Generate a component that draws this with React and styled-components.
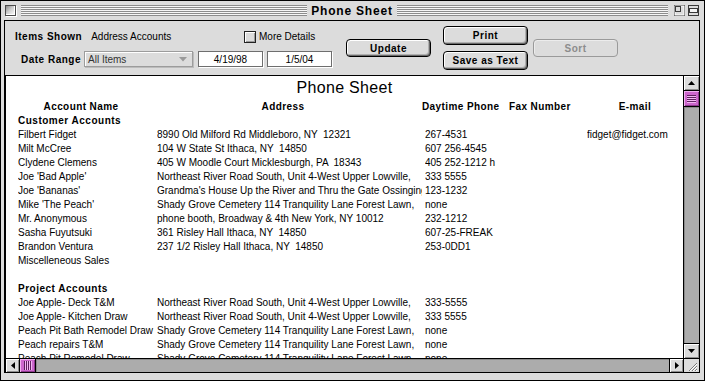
import React from "react";
import styled, { createGlobalStyle } from "styled-components";

const GlobalStyle = createGlobalStyle`
  html, body { margin: 0; padding: 0; background: #fff; }
  body { font-family: "Liberation Sans", Arial, sans-serif; }
`;

const Window = styled.div`
  box-sizing: border-box;
  width: 705px;
  height: 381px;
  border: 1px solid #000;
  background: #dcdcdc;
  padding: 0 4px 7px 3px;
  display: flex;
  flex-direction: column;
  overflow: hidden;
`;

const TitleBar = styled.div`
  height: 19px;
  display: grid;
  grid-template-columns: 1fr auto 1fr;
  align-items: center;
`;

const TitleSide = styled.div`
  display: flex;
  align-items: center;
  gap: ${p => p.$gap || 0}px;
  padding: ${p => p.$pad};
`;

const Stripes = styled.div`
  flex: 1;
  height: 11px;
  background: repeating-linear-gradient(to bottom, #8c8c8c 0 1px, #f6f6f6 1px 2px);
`;

const TitleText = styled.div`
  padding: 0 4px;
  font: bold 12px "Liberation Sans", Arial, sans-serif;
  letter-spacing: 0.8px;
  color: #000;
`;

const CloseBox = styled.div`
  box-sizing: border-box;
  width: 11px;
  height: 11px;
  border: 1px solid #4a4a4a;
  background: linear-gradient(135deg, #8a8a8a 0%, #cfcfcf 45%, #ffffff 100%);
  box-shadow: inset -1px -1px 0 #fff, 1px 1px 0 #fff;
  margin-right: 5px;
`;

const BoxIcon = styled.svg`
  display: block;
  width: 11px;
  height: 11px;
`;

const Panel = styled.div`
  flex: 1;
  min-height: 0;
  border: 1px solid #000;
  display: flex;
  flex-direction: column;
`;

const Toolbar = styled.div`
  height: 54px;
  flex: none;
  display: flex;
  align-items: center;
  padding-left: 10px;
  background: #dcdcdc;
  font-size: 10px;
`;

const Fields = styled.div`
  display: flex;
  flex-direction: column;
  gap: 7px;
`;

const FieldRow = styled.div`
  display: flex;
  align-items: center;
  height: ${p => p.$h}px;
`;

const ShownGroup = styled.div`
  width: 229px;
  display: flex;
  align-items: center;
  gap: 9px;
`;

const Label = styled.span`
  font-weight: bold;
  letter-spacing: 0.5px;
  width: ${p => (p.$w ? `${p.$w}px` : "auto")};
  text-align: ${p => p.$align || "left"};
  color: #000;
`;

const Value = styled.span`
  color: #000;
`;

const Check = styled.span`
  box-sizing: border-box;
  width: 12px;
  height: 12px;
  border: 1px solid #222;
  background: #dcdcdc;
  box-shadow: inset 1px 1px 0 #fff, inset -1px -1px 0 #9a9a9a;
  margin-right: 3px;
`;

const Popup = styled.div`
  box-sizing: border-box;
  width: 109px;
  height: 16px;
  margin-left: 3px;
  border: 1px solid #9c9c9c;
  background: #dcdcdc;
  box-shadow: inset 1px 1px 0 #fff, 1px 1px 0 #bcbcbc;
  display: flex;
  align-items: center;
  justify-content: space-between;
  padding: 0 5px 0 3px;
  color: #333;
`;

const DateField = styled.div`
  box-sizing: border-box;
  width: 65px;
  height: 16px;
  margin-left: ${p => p.$ml}px;
  border: 1px solid #6e6e6e;
  background: #fff;
  box-shadow: 1px 1px 0 #fff;
  display: flex;
  align-items: center;
  justify-content: center;
  color: #000;
`;

const Button = styled.button`
  box-sizing: border-box;
  width: 85px;
  height: ${p => p.$h}px;
  margin: 0 0 0 ${p => p.$ml || 0}px;
  padding: 0;
  border: 1px solid ${p => (p.disabled ? "#9a9a9a" : "#000")};
  border-radius: 4px;
  background: #dcdcdc;
  box-shadow: ${p =>
    p.disabled
      ? "inset 1px 1px 0 #ececec"
      : "inset 1px 1px 0 #fff, inset -1px -1px 0 #6a6a6a, inset -2px -2px 0 #b0b0b0"};
  font: bold 10px "Liberation Sans", Arial, sans-serif;
  letter-spacing: 0.5px;
  color: ${p => (p.disabled ? "#8c8c8c" : "#000")};
`;

const ButtonStack = styled.div`
  display: flex;
  flex-direction: column;
  gap: 6px;
  margin-left: 12px;
`;

const Body = styled.div`
  flex: 1;
  min-height: 0;
  border-top: 1px solid #000;
  display: grid;
  grid-template-columns: 1fr 16px;
  grid-template-rows: 1fr 14px;
`;

const Sheet = styled.div`
  background: #fff;
  border-left: 1px solid #000;
  overflow: hidden;
  padding-top: 2px;
  font-size: 10px;
  color: #000;
`;

const SheetTitle = styled.div`
  text-align: center;
  font-size: 16px;
  line-height: 20px;
  margin-bottom: 2px;
  letter-spacing: 0.3px;
`;

const HeaderRow = styled.div`
  display: grid;
  grid-template-columns: 126px 278px 87px 78px 1fr;
  padding-left: 12px;
  line-height: 14px;
`;

const Header = styled.div`
  font-weight: bold;
  letter-spacing: 0.4px;
  text-align: ${p => p.$align};
  white-space: nowrap;
`;

const Row = styled.div`
  display: grid;
  grid-template-columns: 139px 268px 84px 78px 1fr;
  padding-left: 12px;
  line-height: 14px;
  height: 14px;
`;

const Cell = styled.div`
  white-space: pre;
  overflow: hidden;
  margin-right: 3px;
`;

const Section = styled.div`
  font-weight: bold;
  letter-spacing: 0.5px;
  padding-left: 12px;
  line-height: 14px;
  height: 14px;
`;

const VScroll = styled.div`
  border-left: 1px solid #000;
  display: flex;
  flex-direction: column;
  min-height: 0;
`;

const HScroll = styled.div`
  border-top: 1px solid #000;
  border-left: 1px solid #000;
  display: flex;
`;

const ArrowBox = styled.div`
  flex: none;
  box-sizing: border-box;
  width: ${p => (p.$v ? "auto" : "14px")};
  height: ${p => (p.$v ? "15px" : "auto")};
  background: #dcdcdc;
  box-shadow: inset 1px 1px 0 #fff, inset -1px -1px 0 #8e8e8e;
  border-${p => p.$edge}: 1px solid #000;
  display: flex;
  align-items: center;
  justify-content: center;
`;

const Track = styled.div`
  flex: 1;
  background: #acacac;
  box-shadow: inset 1px 1px 0 #8a8a8a;
`;

const Thumb = styled.div`
  flex: none;
  box-sizing: border-box;
  width: ${p => (p.$v ? "auto" : "16px")};
  height: ${p => (p.$v ? "16px" : "auto")};
  background: #cc66cc;
  border-${p => (p.$v ? "bottom" : "right")}: 1px solid #000;
  box-shadow: inset 1px 1px 0 #f0b0f0, inset -1px -1px 0 #8e3a8e;
  display: flex;
  align-items: center;
  justify-content: center;
`;

const Corner = styled.div`
  border-top: 1px solid #000;
  border-left: 1px solid #000;
  background: #dcdcdc;
  display: flex;
  align-items: center;
  justify-content: center;
`;

const Tri = ({ dir }) => {
  const pts = {
    up: "0,4 7,4 3.5,0",
    down: "0,0 7,0 3.5,4",
    left: "4,0 4,7 0,3.5",
    right: "0,0 0,7 4,3.5"
  }[dir];
  const vert = dir === "up" || dir === "down";
  return (
    <svg width={vert ? 7 : 4} height={vert ? 4 : 7} viewBox={vert ? "0 0 7 4" : "0 0 4 7"}>
      <polygon points={pts} fill="#000" />
    </svg>
  );
};

const Grip = ({ v }) => (
  <svg width={v ? 9 : 8} height={v ? 8 : 9} viewBox={v ? "0 0 9 8" : "0 0 8 9"}>
    {[0, 2, 4, 6].map(i =>
      v ? (
        <g key={i}>
          <rect x="0" y={i} width="9" height="1" fill="#5e1f5e" />
          <rect x="0" y={i + 1} width="9" height="1" fill="#f2b6f2" />
        </g>
      ) : (
        <g key={i}>
          <rect x={i} y="0" width="1" height="9" fill="#5e1f5e" />
          <rect x={i + 1} y="0" width="1" height="9" fill="#f2b6f2" />
        </g>
      )
    )}
  </svg>
);

const customers = [
  ["Filbert Fidget", "8990 Old Milford Rd Middleboro, NY  12321", "267-4531", "", "fidget@fidget.com"],
  ["Milt McCree", "104 W State St Ithaca, NY  14850", "607 256-4545"],
  ["Clydene Clemens", "405 W Moodle Court Micklesburgh, PA  18343", "405 252-1212 h"],
  ["Joe 'Bad Apple'", "Northeast River Road South, Unit 4-West Upper Lowville,", "333 5555"],
  ["Joe 'Bananas'", "Grandma's House Up the River and Thru the Gate Ossinging,", "123-1232"],
  ["Mike 'The Peach'", "Shady Grove Cemetery 114 Tranquility Lane Forest Lawn,", "none"],
  ["Mr. Anonymous", "phone booth, Broadway & 4th New York, NY 10012", "232-1212"],
  ["Sasha Fuyutsuki", "361 Risley Hall Ithaca, NY  14850", "607-25-FREAK"],
  ["Brandon Ventura", "237 1/2 Risley Hall Ithaca, NY  14850", "253-0DD1"],
  ["Miscelleneous Sales", "", ""],
  ["", "", ""]
];

const projects = [
  ["Joe Apple- Deck T&M", "Northeast River Road South, Unit 4-West Upper Lowville,", "333-5555"],
  ["Joe Apple- Kitchen Draw", "Northeast River Road South, Unit 4-West Upper Lowville,", "333 5555"],
  ["Peach Pit Bath Remodel Draw", "Shady Grove Cemetery 114 Tranquility Lane Forest Lawn,", "none"],
  ["Peach repairs T&M", "Shady Grove Cemetery 114 Tranquility Lane Forest Lawn,", "none"],
  ["Peach Pit Remodel Draw", "Shady Grove Cemetery 114 Tranquility Lane Forest Lawn,", "none"]
];

const DataRow = ({ item }) => (
  <Row>
    {[0, 1, 2, 3, 4].map(i => (
      <Cell key={i}>{item[i] || ""}</Cell>
    ))}
  </Row>
);

export default function App() {
  return (
    <>
      <GlobalStyle />
      <Window>
        <TitleBar>
          <TitleSide $pad="0 0 0 1px">
            <CloseBox />
            <Stripes />
          </TitleSide>
          <TitleText>Phone Sheet</TitleText>
          <TitleSide $pad="0 1px 0 0" $gap={3}>
            <Stripes style={{ marginRight: 3 }} />
            <BoxIcon viewBox="0 0 11 11">
              <rect x="0.5" y="0.5" width="10" height="10" fill="#dcdcdc" stroke="#3a3a3a" />
              <rect x="1" y="1" width="9" height="9" fill="none" stroke="#fff" strokeWidth="1" />
              <rect x="1.5" y="1.5" width="5" height="5" fill="#dcdcdc" stroke="#3a3a3a" />
            </BoxIcon>
            <BoxIcon viewBox="0 0 11 11">
              <rect x="0.5" y="0.5" width="10" height="10" fill="#dcdcdc" stroke="#3a3a3a" />
              <rect x="1.5" y="3.5" width="8" height="4" fill="#f4f4f4" stroke="#3a3a3a" />
            </BoxIcon>
          </TitleSide>
        </TitleBar>
        <Panel>
          <Toolbar>
            <Fields>
              <FieldRow $h={15}>
                <ShownGroup>
                  <Label>Items Shown</Label>
                  <Value>Address Accounts</Value>
                </ShownGroup>
                <Check />
                <Value>More Details</Value>
              </FieldRow>
              <FieldRow $h={16}>
                <Label $w={66} $align="right">Date Range</Label>
                <Popup>
                  <span>All Items</span>
                  <svg width="8" height="5" viewBox="0 0 8 5">
                    <polygon points="0,0 8,0 4,4.5" fill="#9a9a9a" />
                  </svg>
                </Popup>
                <DateField $ml={5}>4/19/98</DateField>
                <DateField $ml={4}>1/5/04</DateField>
              </FieldRow>
            </Fields>
            <Button $h={18} $ml={14}>Update</Button>
            <ButtonStack>
              <Button $h={19}>Print</Button>
              <Button $h={19}>Save as Text</Button>
            </ButtonStack>
            <Button $h={18} $ml={5} disabled>Sort</Button>
          </Toolbar>
          <Body>
            <Sheet>
              <SheetTitle>Phone Sheet</SheetTitle>
              <HeaderRow>
                <Header $align="center">Account Name</Header>
                <Header $align="center">Address</Header>
                <Header $align="left">Daytime Phone</Header>
                <Header $align="left">Fax Number</Header>
                <Header $align="center">E-mail</Header>
              </HeaderRow>
              <Section>Customer Accounts</Section>
              {customers.map((c, i) => (
                <DataRow key={i} item={c} />
              ))}
              <Section>Project Accounts</Section>
              {projects.map((c, i) => (
                <DataRow key={i} item={c} />
              ))}
            </Sheet>
            <VScroll>
              <ArrowBox $v $edge="bottom"><Tri dir="up" /></ArrowBox>
              <Thumb $v><Grip v /></Thumb>
              <Track />
              <ArrowBox $v $edge="top"><Tri dir="down" /></ArrowBox>
            </VScroll>
            <HScroll>
              <ArrowBox $edge="right"><Tri dir="left" /></ArrowBox>
              <Thumb><Grip /></Thumb>
              <Track />
              <ArrowBox $edge="left"><Tri dir="right" /></ArrowBox>
            </HScroll>
            <Corner>
              <svg width="11" height="11" viewBox="0 0 11 11">
                {[3, 6, 9].map(o => (
                  <g key={o}>
                    <line x1={o} y1="11" x2="11" y2={o} stroke="#7a7a7a" strokeWidth="1" />
                    <line x1={o + 1} y1="11" x2="11" y2={o + 1} stroke="#fff" strokeWidth="1" />
                  </g>
                ))}
              </svg>
            </Corner>
          </Body>
        </Panel>
      </Window>
    </>
  );
}
